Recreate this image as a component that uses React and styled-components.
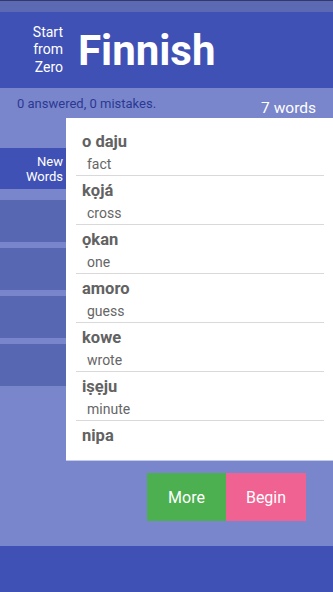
import React from "react";
import styled, { createGlobalStyle } from "styled-components";

const Global = createGlobalStyle`
  html, body { margin: 0; padding: 0; }
  body { font-family: Roboto, "Noto Sans", sans-serif; }
  #root { height: 592px; }
`;

const Screen = styled.div`
  height: 592px;
  display: flex;
  flex-direction: column;
  background: #7986cb;
  overflow: hidden;
`;

const StatusBar = styled.div`
  height: 11px;
  flex: none;
  background: #5b6ab2;
  border-top: 1px solid #33396b;
`;

const Header = styled.header`
  height: 76px;
  flex: none;
  background: #3f51b5;
  display: flex;
  align-items: center;
  gap: 15px;
`;

const SubTitle = styled.div`
  width: 63px;
  text-align: right;
  color: #fff;
  font-size: 14px;
  line-height: 17.5px;
`;

const Title = styled.h1`
  margin: 0;
  color: #fff;
  font-size: 42px;
  font-weight: 700;
  line-height: 1;
  padding-top: 1px;
`;

const Main = styled.main`
  flex: 1;
  display: flex;
  flex-direction: column;
`;

const StatsRow = styled.div`
  height: 30px;
  display: flex;
  justify-content: space-between;
  padding: 0 17px;
`;

const Stats = styled.div`
  color: #2b3994;
  font-size: 13px;
  line-height: 15px;
  padding-top: 8px;
`;

const Count = styled.div`
  color: #fff;
  font-size: 15.5px;
  line-height: 18px;
  align-self: flex-end;
  margin-bottom: 1px;
`;

const Body = styled.div`
  display: flex;
  align-items: flex-start;
`;

const Sidebar = styled.nav`
  width: 66px;
  flex: none;
  padding-top: 30px;
  display: flex;
  flex-direction: column;
`;

const Tab = styled.div`
  height: ${(p) => (p.$active ? 41 : 42)}px;
  margin-bottom: ${(p) => (p.$active ? 11 : 6)}px;
  background: ${(p) => (p.$active ? "#3f51b5" : "#5767b1")};
  color: #fff;
  display: flex;
  flex-direction: column;
  justify-content: center;
  align-items: flex-end;
  padding-right: 3px;
  font-size: 13px;
  line-height: 15px;
  text-align: right;
`;

const Card = styled.section`
  flex: 1;
  height: 343px;
  background: #fff;
  padding: 9px 9px 0 10px;
  box-sizing: border-box;
  overflow: hidden;
  border-bottom: 1px solid #c5cae9;
`;

const Row = styled.div`
  padding-top: 4px;
  border-bottom: ${(p) => (p.$last ? "none" : "1px solid #d9d9d9")};
`;

const Word = styled.div`
  padding-left: 6px;
  color: #626262;
  font-weight: 700;
  font-size: 16.5px;
  line-height: 22px;
`;

const Meaning = styled.div`
  padding-left: 11px;
  color: #666;
  font-size: 14px;
  line-height: 22px;
`;

const Actions = styled.div`
  display: flex;
  padding: 12px 0 0 147px;
`;

const Button = styled.button`
  width: ${(p) => p.$w}px;
  height: 48px;
  border: none;
  margin: 0;
  padding: 0;
  background: ${(p) => p.$bg};
  color: #fff;
  font-family: Roboto, "Noto Sans", sans-serif;
  font-size: 16px;
`;

const Footer = styled.footer`
  height: 46px;
  flex: none;
  background: #3f51b5;
`;

const words = [
  ["o daju", "fact"],
  ["kọjá", "cross"],
  ["ọkan", "one"],
  ["amoro", "guess"],
  ["kowe", "wrote"],
  ["iṣẹju", "minute"],
  ["nipa", ""],
];

export default function App() {
  return (
    <>
      <Global />
      <Screen>
        <StatusBar />
        <Header>
          <SubTitle>
            Start
            <br />
            from
            <br />
            Zero
          </SubTitle>
          <Title>Finnish</Title>
        </Header>
        <Main>
          <StatsRow>
            <Stats>0 answered, 0 mistakes.</Stats>
            <Count>7 words</Count>
          </StatsRow>
          <Body>
            <Sidebar>
              <Tab $active>
                <span>New</span>
                <span>Words</span>
              </Tab>
              <Tab />
              <Tab />
              <Tab />
              <Tab />
            </Sidebar>
            <Card>
              {words.map(([w, m], i) => (
                <Row key={w} $last={i === words.length - 1}>
                  <Word>{w}</Word>
                  {m && <Meaning>{m}</Meaning>}
                </Row>
              ))}
            </Card>
          </Body>
          <Actions>
            <Button $w={79} $bg="#4caf50">More</Button>
            <Button $w={80} $bg="#f06292">Begin</Button>
          </Actions>
        </Main>
        <Footer />
      </Screen>
    </>
  );
}
